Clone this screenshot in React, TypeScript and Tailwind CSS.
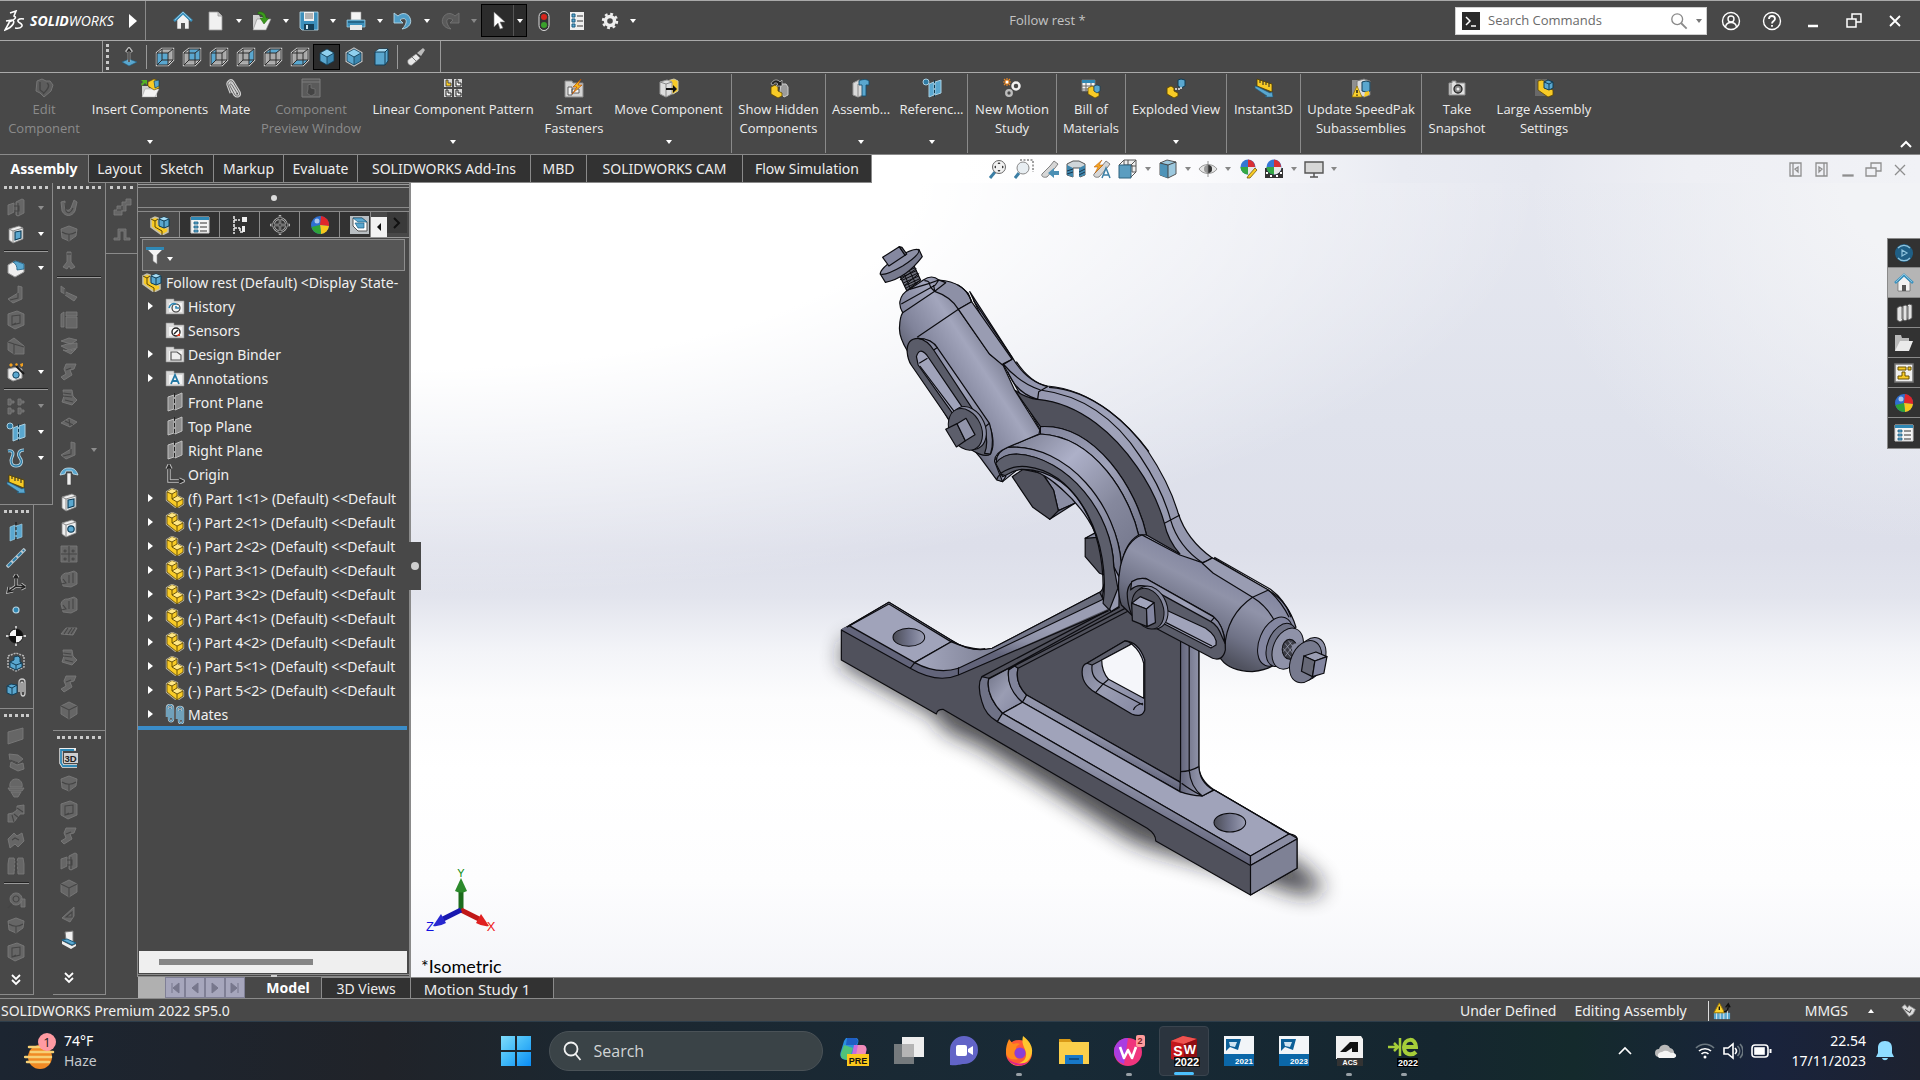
import React from "react";

type Kids = { children?: React.ReactNode };

const Svg = ({ children, size = "h-5 w-5" }: Kids & { size?: string }) => (
  <svg viewBox="0 0 20 20" className={`${size} shrink-0`} aria-hidden="true" fill="none">
    {children}
  </svg>
);

const Caret = ({ c = "#ffffff" }: { c?: string }) => (
  <svg viewBox="0 0 6 4" className="h-1 w-1.5 shrink-0" aria-hidden="true">
    <path d="M0 0h6L3 4z" fill={c} />
  </svg>
);

const B = "#5aa7cf";
const D = "#1d5d80";
const Y = "#f8cb26";

/* ---------- view cubes ---------- */
const faces: Record<string, string> = {
  front: "M2 6h11v12H2z",
  back: "M7 2h11v11H7z",
  left: "M2 6l5-4v11l-5 5z",
  right: "M13 6l5-4v11l-5 5z",
  top: "M2 6l5-4h11l-5 4z",
  bottom: "M2 18l5-5h11l-5 5z",
};
const Wire = ({ face }: { face: string }) => (
  <Svg>
    <path d="M2 6l5-4h11v11l-5 5H2z" fill="#a9a9a9" stroke="#cdcdcd" strokeWidth="2.400" />
    <path d={faces[face]} fill={B} />
    <path d="M2 6l5-4h11v11l-5 5H2zM2 6h11v12M13 6l5-4M7 2v11H18M7 13l-5 5" stroke="#2c2c2c" strokeWidth="1" />
  </Svg>
);
const Iso = ({ glow }: { glow?: boolean }) => (
  <Svg>
    {glow && <path d="M10 2l7 4v8l-7 4-7-4V6z" stroke="#c4c4c4" strokeWidth="3" />}
    <path d="M10 2l7 4-7 4-7-4z" fill="#8fd0ee" />
    <path d="M3 6l7 4v8l-7-4z" fill={B} />
    <path d="M17 6l-7 4v8l7-4z" fill="#3b87b0" />
    <path d="M10 2l7 4v8l-7 4-7-4V6zM3 6l7 4 7-4M10 10v8" stroke="#123f58" strokeWidth=".8" />
  </Svg>
);
const Dimetric = () => (
  <Svg>
    <path d="M4 5l4-3h9v12l-3 4H4z" fill={B} stroke="#123f58" />
    <path d="M4 5l4-3h9l-3 3z" fill="#a4d8ef" />
    <path d="M4 5h10v13M14 5l3-3" stroke="#123f58" />
  </Svg>
);

/* ---------- tree and feature icons ---------- */
const PartIcon = () => (
  <Svg>
    <path d="M2 4l5-3 5 2v5l6 3v5l-6 4L2 12z" fill={Y} stroke="#b9b4a0" strokeWidth="2.4" strokeLinejoin="round" />
    <path d="M2 4l5-3 5 2v5l6 3v5l-6 4L2 12z" fill={Y} stroke="#5e4700" strokeWidth=".8" />
    <path d="M2 4l5 2 5-3-5-2zM7 11l5-3 6 3-6 3z" fill="#ffe784" />
    <path d="M2 4l5 2v5l5 3v6M7 6l5-3M7 11l5-3M12 14l6-3" stroke="#5e4700" strokeWidth=".9" />
  </Svg>
);
const AsmIcon = () => (
  <Svg>
    <path d="M1 4l4-2 3 1v6l8 4 2-2v6l-6 3L1 12z" fill={Y} stroke="#c5c0aa" strokeWidth="1.6" />
    <path d="M1 4l4 2v6l7 4v4M5 6l3-2" stroke="#5e4700" />
    <path d="M9 4l5-2 5 2v7l-5 2-5-2z" fill={B} stroke="#0f3c55" />
    <path d="M9 4l5 2 5-2-5-2z" fill="#a8dcf3" />
    <path d="M9 4l5 2 5-2M14 6v7" stroke="#0f3c55" />
  </Svg>
);
const Folder = ({ children }: Kids) => (
  <Svg>
    <path d="M1 3h8v2h10v13H1z" fill="#d9d9d9" stroke="#8f8f8f" strokeWidth=".6" />
    <path d="M4 7h13v9H4z" fill="#f3f3f3" />
    {children}
  </Svg>
);
const PlaneIcon = () => (
  <Svg>
    <path d="M3 5l6-2v14l-6 2zM10 4l7-3v14l-7 3z" fill="#8d8d8d" stroke="#c0c0c0" strokeWidth="1" />
    <path d="M9.500 1v18" stroke="#222" strokeDasharray="4 2" />
  </Svg>
);
const OriginIcon = () => (
  <Svg>
    <path d="M4 3v14h14M2 5l2-4 2 4M14 15l4 2-4 2" stroke="#bdbdbd" strokeWidth="3.400" />
    <path d="M4 3v14h14M2 5l2-4 2 4M14 15l4 2-4 2" stroke="#2b2b2b" strokeWidth="1.400" />
  </Svg>
);
const Clip = () => (
  <Svg>
    <path d="M6 15l-3-8C2 4 6 1 8 4l6 10c2 4-2 5-4 3L5 8c-1-2 1-3 2-1l5 8" stroke="#d2d2d2" strokeWidth="3" />
    <path d="M6 15l-3-8C2 4 6 1 8 4l6 10c2 4-2 5-4 3L5 8c-1-2 1-3 2-1l5 8" stroke="#5d5d5d" strokeWidth=".9" />
  </Svg>
);
const MatesIcon = () => (
  <Svg>
    <path d="M2 13V4c0-4 6-4 6 0v11c0 3-4 3-4 0V5c0-1 2-1 2 0v9" stroke="#b7c4cb" strokeWidth="2.400" />
    <path d="M2 13V4c0-4 6-4 6 0v11c0 3-4 3-4 0V5c0-1 2-1 2 0v9" stroke="#2b7fab" />
    <path d="M12 15V6c0-4 6-4 6 0v11c0 3-4 3-4 0V7c0-1 2-1 2 0v9" stroke="#b7c4cb" strokeWidth="2.400" />
    <path d="M12 15V6c0-4 6-4 6 0v11c0 3-4 3-4 0V7c0-1 2-1 2 0v9" stroke="#2b7fab" />
  </Svg>
);
const RefGeo = () => (
  <Svg>
    <path d="M7 6l5-2v13l-5 2zM13 4l6-2v13l-6 2z" fill={B} stroke="#a9cfe1" />
    <path d="M12.500 2v17" stroke="#10384d" strokeDasharray="3 2" />
    <circle cx="4" cy="4" r="3" fill="#2f7ba4" stroke="#a9cfe1" />
  </Svg>
);
const Ruler = () => (
  <Svg>
    <path d="M3 1l15 5v8L3 8z" fill={Y} stroke="#4e3c00" strokeWidth=".8" />
    <path d="M6 2v3M9 3v4M12 4v3M15 5v4" stroke="#222" />
    <path d="M1 8l3 1 12 6 2-1 1 5-8 0 2-1-12-8z" fill={B} stroke={D} strokeWidth=".6" />
  </Svg>
);
const Ball = () => (
  <Svg>
    <circle cx="10" cy="10" r="9" fill="#2f6fd0" />
    <path d="M10 10L11 1a9 9 0 0 1 8 10z" fill="#e0252b" />
    <path d="M10 10l9 1a9 9 0 0 1-8 8z" fill="#f6c81c" />
    <path d="M10 10l1 9a9 9 0 0 1-9.500-7z" fill="#2fa437" />
    <circle cx="7" cy="6" r="2.500" fill="#fff" opacity=".6" />
  </Svg>
);
const ListIcon = () => (
  <Svg>
    <path d="M1 2h18v16H1z" fill="#f4f4f4" stroke="#cfcfcf" />
    <path d="M1 2h18v3H1z" fill="#2f88b5" />
    <path d="M4 7h4v2H4zM4 11h4v2H4zM4 15h4v2H4z" fill={B} stroke={D} strokeWidth=".8" />
    <path d="M10 8h7M10 12h7M10 16h7" stroke="#333" strokeWidth="1.200" />
  </Svg>
);
const HomeIcon = () => (
  <Svg>
    <path d="M4 9v9h12V9l-6-6z" fill="#f2f2f2" stroke="#555" strokeWidth=".6" />
    <path d="M8 18v-6h4v6" fill="#555" />
    <path d="M1 10l9-8 9 8" stroke="#3c94c1" strokeWidth="2.600" />
    <path d="M2 9l8-8 8 8" stroke="#bfe0f0" strokeWidth=".6" />
  </Svg>
);
const HoleCube = ({ sq }: { sq?: boolean }) => (
  <Svg>
    <path d="M3 5l10-3 4 2v11l-10 4-4-3z" fill="#efefef" stroke="#888" strokeWidth=".8" />
    <path d="M3 5l4 2 10-3M7 7v12" stroke="#888" />
    {sq ? <path d="M9 8l6-1v7l-6 2z" fill={B} stroke="#12405a" strokeWidth="1.200" /> : <circle cx="12" cy="11" r="3.200" fill={B} stroke="#12405a" strokeWidth="1.200" />}
  </Svg>
);

/* ---------- greyed command glyphs ---------- */
const dim: Record<string, [string, string]> = {
  extrude: ["M2 7l6-2v9l-6 3zM10 4l6-3 2 1v13l-6 3-2-1z", "M8 8h5v5H8M12 5v12"],
  fillet: ["M2 15L12 9V2l4 1v12l-9 4z", "M12 9v5l-8 2"],
  shell: ["M2 4l9-3 7 3v11l-9 4-7-4z", "M6 6l8-1v8l-8 2zM6 15l4-2"],
  wedge: ["M2 6l6-4 10 8v8l-10 0-6-4z", "M8 8v10M2 6l6 2 10 3"],
  pattern: ["M2 3h3v2h3v2H5v2H2zM12 3h3v2h3v2h-3v2h-3zM2 12h3v2h3v2H5v2H2zM12 12h3v2h3v2h-3v2h-3z", ""],
  flat: ["M2 6l15-4v11L2 18z", ""],
  loft: ["M3 2l9 1 5 4-5 4-8-3zM5 10l6 3 6-2 1 6-6 2-8-4z", "M4 8l8 3"],
  revolve: ["M10 1c5 0 7 5 6 8H4c-1-3 1-8 6-8zM2 10h16l-2 3H4zM5 14h10l-3 5H8z", ""],
  sweep: ["M11 2l7-1 0 9-4 0-3 4-3 4h-6v-8l5-1 4-3z", "M11 4l6 4M8 10l5 4M6 11l2 7"],
  ribbon: ["M2 9l6-6 3 3 5-3 2 8-6 6-3-3-5 4z", "M6 10l3-2 4 2"],
  zip: ["M3 2h5l1 3-1 13H2V8zM12 2h5l1 6v10h-6l-1-13z", "M9 4l2 2-2 2 2 2-2 2 2 2-2 2"],
  zoomA: ["M10 3a6 6 0 1 0 .1 0zM15 9h4v8l-4 0z", "M10 6a3 3 0 1 0 .1 0zM6 14l-4 4"],
  wrap: ["M2 4l4-1v7c1 3 4 3 6 0l3-8 3 2-2 9c-3 6-10 6-13 0z", "M6 5l1 8c2 3 5 2 7-3"],
  dome: ["M2 5l8-3 8 3-1 7-7 5-7-3z", "M3 8c4 3 10 3 14 0M10 10v7"],
  pin: ["M8 2h4v10l4 5-4 2-2-3-2 3-4-2 4-5z", "M8 4h4"],
  brk: ["M2 2l4 3v5l-4-2zM7 8l11 5-3 4-9-6z", "M6 5v6"],
  block: ["M2 4l3-2v15H2zM7 2h11v4H7zM7 7h11v11H7z", ""],
  layers: ["M2 5l8-3 8 2-6 4zM2 10l6-2 10-1 0 5-8 2zM4 14l7 1 6-2-5 5z", ""],
  curve: ["M7 2l10 0-2 5-4 1 2 5-8 5-3-3 5-3-2-5z", "M7 8l5-2"],
  bend: ["M4 2l9 0 1 6 4 4-5 5-10-3 2-6z", "M4 5l8 1M4 8l9 1M6 12l8 2"],
  sheet: ["M2 9l8-5 8 4-7 5z", "M6 7l8 4M10 5l1 7"],
  cube: ["M10 2l8 4v8l-8 5-8-5V6z", "M2 6l8 4 8-4M10 10v9"],
  grid: ["M2 2h16v16H2z", "M10 2v16M2 10h16M6 6a1 1 0 1 0 .1 0M14 6a1 1 0 1 0 .1 0M6 14a1 1 0 1 0 .1 0M14 14a1 1 0 1 0 .1 0"],
  swap: ["M2 8a6 6 0 0 1 7-5l6-2 3 2v11l-6 3-8-1z", "M10 5v8M4 9l3 4-5 1M14 3v10"],
  lines: ["M2 12l5-6 11 0-4 7z", "M5 12l4-6M9 12l4-6M12 12l4-6"],
  rib: ["M3 14L15 3v9l-4 6z", "M7 13l6-5v5z"],
  route: ["M2 17v-5h3V8h5V4h4V1h5v6h-5v6h-4v4z", "M5 12h4M10 8v4"],
  step: ["M2 14h4V5h8v9h4v2h-6V7H8v9H2z", ""],
};
const Dim = ({ n }: { n: string }) => (
  <Svg>
    <path d={dim[n][0]} fill="#666666" stroke="#797979" strokeWidth=".9" />
    {dim[n][1] && <path d={dim[n][1]} stroke="#454545" strokeWidth="1.100" />}
  </Svg>
);

/* ---------- docked toolbars ---------- */
type Tool = { l: string; i?: React.ReactNode; c?: "on" | "off"; sep?: boolean };
const d = (l: string, n: string, c?: "on" | "off"): Tool => ({ l, i: <Dim n={n} />, c });

const ThreeD = () => (
  <Svg>
    <path d="M17 1H2v14l2 3h14" stroke="#eee" strokeWidth="3.400" />
    <path d="M15 2H2v13l2 3h14" stroke="#2f88b5" strokeWidth="1.800" />
    <path d="M5 5h14v10H5z" fill="#cfcfcf" />
    <text x="5.500" y="13.500" fontSize="9.500" fill="#222" fontFamily="Liberation Sans, sans-serif" fontWeight="700">3D</text>
  </Svg>
);

const colA1: Tool[] = [
  d("Extruded Boss", "extrude", "off"),
  { l: "Extruded Cut", i: <HoleCube sq />, c: "on" },
  { l: "s1", sep: true },
  { l: "Fillet", c: "on", i: <Svg><path d="M2 7l7-4 9 3v8l-9 5-7-4z" fill="#efefef" stroke="#999" /><path d="M7 4l3-1 8 3v5l-7 1c0-4-1-6-4-8z" fill={B} stroke={D} strokeWidth=".8" /></Svg> },
  d("Rib", "fillet"),
  d("Shell", "shell"),
  d("Draft", "wedge"),
  { l: "Hole Wizard", c: "on", i: <Svg><path d="M2 7l9-2 5 2v9l-9 3-5-3z" fill="#ececec" stroke="#999" /><circle cx="10" cy="13" r="3.200" fill={B} stroke="#12405a" /><path d="M10 4l8 8" stroke="#1a1a1a" strokeWidth="2" /><path d="M3 3l2-2 2 2-2 2zM9 2l2-1 1 2-2 1zM14 2l3-1 0 3-2 1z" fill="#f4a11f" /></Svg> },
  { l: "s2", sep: true },
  d("Linear Pattern", "pattern", "off"),
  { l: "Reference Geometry", c: "on", i: <RefGeo /> },
  { l: "Curves", c: "on", i: <Svg><path d="M2 3c5-1 6 2 4 6s-1 9 4 9 7-4 4-8-1-8 4-8" stroke="#bcd7e4" strokeWidth="3" /><path d="M2 3c5-1 6 2 4 6s-1 9 4 9 7-4 4-8-1-8 4-8" stroke="#2f7fa8" strokeWidth="1.400" /></Svg> },
  { l: "Instant3D tool", i: <Ruler /> },
];
const colA2: Tool[] = [
  { l: "Plane", i: <Svg><path d="M4 5l5-2v14l-5 2zM10 4l6-2v13l-6 2z" fill={B} stroke="#9fcbe0" strokeWidth=".7" /><path d="M10 0v20" stroke="#111" strokeDasharray="3 2" /></Svg> },
  { l: "Axis", i: <Svg><path d="M1 19L19 1" stroke="#b9c8d0" strokeWidth="3.500" /><path d="M2 18L18 2" stroke="#2b7fab" strokeWidth="2" strokeDasharray="5 2" /></Svg> },
  { l: "Coordinate System", i: <Svg><path d="M10 3v9l-7 5M10 12l8 1M8 4l2-3 2 3M3 13l-1 5 5-1M15 10l4 3-4 2" stroke="#bdbdbd" strokeWidth="3.200" /><path d="M10 3v9l-7 5M10 12l8 1M8 4l2-3 2 3M3 13l-1 5 5-1M15 10l4 3-4 2" stroke="#222" strokeWidth="1.500" /></Svg> },
  { l: "Point", i: <Svg><circle cx="10" cy="10" r="3" fill="#2f88b5" stroke="#b6d4e2" strokeWidth="1.200" /></Svg> },
  { l: "Center of Mass", i: <Svg><path d="M10 0v20M0 10h20" stroke="#ccc" strokeWidth="1.800" /><circle cx="10" cy="10" r="7" fill="#f4f4f4" stroke="#111" /><path d="M10 3a7 7 0 0 1 7 7h-7zM10 17a7 7 0 0 1-7-7h7z" fill="#111" /></Svg> },
  { l: "Bounding Box", i: <Svg><path d="M2 4l8-3 8 3v11l-8 4-8-4z" stroke="#b5b5b5" strokeDasharray="2 1" strokeWidth="1.500" /><path d="M4 10l4-2V5l4-1 2 2v4l2 1v4l-6 3-6-3z" fill={B} stroke="#123f58" /><path d="M4 10l6 3 6-2M10 13v5" stroke="#123f58" /></Svg> },
  { l: "Mate Reference", i: <Svg><path d="M1 8l4-2 6 1v8l-5 2-5-2z" fill={B} stroke="#123f58" /><path d="M1 8l5 2 5-3M6 10v7" stroke="#123f58" /><path d="M13 14V4c0-4 6-4 6 0v11c0 4-4 4-4 0V5c0-1 2-1 2 0v9" stroke="#ccc" strokeWidth="1.300" /></Svg> },
];
const colA3: Tool[] = [
  d("Planar Surface", "flat"), d("Lofted Surface", "loft"), d("Revolved Surface", "revolve"), d("Swept Surface", "sweep"),
  d("Filled Surface", "ribbon"), d("Knit Surface", "zip"), { l: "s3", sep: true },
  d("Trim Surface", "zoomA"), d("Extend Surface", "dome"), d("Untrim Surface", "shell"),
];
const colB1: Tool[] = [
  d("Wrap", "wrap"), d("Dome", "dome"), d("Freeform", "pin"), { l: "s4", sep: true },
  d("Base Flange", "brk"), d("Convert", "block"), d("Lofted Bend", "layers"), d("Edge Flange", "curve"),
  d("Miter Flange", "bend"), d("Hem", "sheet"), d("Jog", "fillet", "off"),
  { l: "Forming Tool", i: <Svg><path d="M1 9c2-6 5-7 9-7s7 1 9 7l-5-1-1-3H7L6 8z" fill={B} stroke="#d7ecf5" strokeWidth=".7" /><path d="M8 7h4v12H8z" fill="#eee" stroke="#444" strokeWidth=".6" /></Svg> },
  { l: "Cut", i: <HoleCube sq /> }, { l: "Simple Hole", i: <HoleCube /> },
  d("Vent", "grid"), d("Unfold", "swap"), d("Fold", "swap"), d("Flatten", "lines"), d("No Bends", "bend"), d("Insert Bends", "curve"), d("Rip", "cube"),
];
const colB2: Tool[] = [
  { l: "3D Sketch", i: <ThreeD /> },
  d("Weldment", "dome"), d("Structural Member", "shell"), d("Trim Extend", "curve"), d("Extruded Boss 2", "extrude"), d("End Cap", "cube"), d("Gusset", "rib"),
  { l: "Weld Bead", i: <Svg><path d="M6 2l8-1v11l-7-2z" fill="#f0f0f0" stroke="#777" /><path d="M3 10l5-1 9 4-4 2z" fill={B} stroke={D} /><path d="M3 11l10 5 4-2v2l-5 3-9-5z" fill="#eee" /></Svg> },
];

const Grip = () => <div className="mx-1 mt-[3px] mb-[6px] h-[3px] shrink-0 border-t-[3px] border-dotted border-[#c9c9c9]" />;

const ToolGroup = ({ items, w, pad, name }: { items: Tool[]; w: string; pad: string; name: string }) => (
  <div role="toolbar" aria-label={name} className={`${w} ${pad} flex shrink-0 flex-col border-r border-b border-[#8a8a8a]`}>
    <Grip />
    {items.map((t) =>
      t.sep ? (
        <div key={t.l} className="mx-1 my-[3px] h-[2px] shrink-0 border-t border-b border-t-[#222] border-b-[#9a9a9a]" />
      ) : (
        <div key={t.l} className="flex h-[26px] shrink-0 items-center pl-1.5">
          <button aria-label={t.l} className="flex h-5 w-5 items-center justify-center">{t.i}</button>
          {t.c && <button aria-label={`${t.l} options`} className="ml-3 flex h-5 w-2 items-center"><Caret c={t.c === "on" ? "#fff" : "#8d8d8d"} /></button>}
        </div>
      ),
    )}
  </div>
);

const More = ({ w }: { w: string }) => (
  <div className={`${w} flex flex-1 items-center border-r border-b border-[#8a8a8a]`}>
    <button aria-label="More commands" className="ml-2 h-4 w-4">
      <svg viewBox="0 0 16 16" fill="none" stroke="#fff" strokeWidth="1.800"><path d="M4 3l4 4 4-4M4 8l4 4 4-4" /></svg>
    </button>
  </div>
);

/* ---------- title bar ---------- */
const quick: { l: string; off?: boolean; i: React.ReactNode }[] = [
  { l: "New", i: <Svg><path d="M4 1h9l4 4v14H4z" fill="#f1f1f1" stroke="#999" strokeWidth=".8" /><path d="M13 1v4h4" fill="#ccc" stroke="#999" strokeWidth=".8" /></Svg> },
  { l: "Open", i: <Svg><path d="M1 4h6l1 2h6v13H1z" fill="#cfcfcf" /><path d="M5 8h14l-5 11H1z" fill="#efefef" stroke="#888" strokeWidth=".6" /><path d="M6 1c5-1 8 2 8 6h3l-5 6-4-6h3c0-3-2-4-5-4z" fill="#3c9a1e" stroke="#1f5c0c" strokeWidth=".5" /></Svg> },
  { l: "Save", i: <Svg><path d="M1 1h18v18H3l-2-2z" fill="#3c8fbb" stroke="#bcdcea" strokeWidth=".8" /><path d="M5 1h10v9H5z" fill="#f1f1f1" /><path d="M6 3h8M6 5h8M6 7h8" stroke="#555" strokeWidth=".8" /><path d="M5 13h10v6H5z" fill="#163f56" /><path d="M7 14h2v4H7z" fill="#cfe8f4" /></Svg> },
  { l: "Print", i: <Svg><path d="M5 1h10v8H5z" fill="#f4f4f4" stroke="#999" strokeWidth=".6" /><path d="M1 9h18v7H1z" fill="#3b8fba" stroke="#a8d1e4" strokeWidth=".7" /><path d="M2 11h16" stroke="#123f58" /><path d="M4 14h12v5H4z" fill="#e9e9e9" /></Svg> },
  { l: "Undo", i: <Svg><path d="M1 2v10h9L7 9c4-3 7-1 6 3-1 3-2 4-4 6 8-1 10-7 8-11-2-5-8-6-12-2z" fill="#4f9dc7" stroke="#b5d7e7" strokeWidth=".9" /></Svg> },
  { l: "Redo", off: true, i: <Svg><path d="M19 2v10h-9l3-3c-4-3-7-1-6 3 1 3 2 4 4 6-8-1-10-7-8-11 2-5 8-6 12-2z" fill="#5a5a5a" stroke="#747474" strokeWidth=".9" /></Svg> },
];

const TitleBar = () => (
  <header className="flex h-[41px] shrink-0 items-stretch border-t border-b border-[#a9a9a9]">
    <div className="flex w-[146px] items-center border-r border-[#8a8a8a] pl-1">
      <svg viewBox="0 0 22 22" className="h-[22px] w-[22px]" fill="none" stroke="#fff" strokeWidth="1.600" aria-hidden="true">
        <path d="M6 3l6-2-2 5c3 1 1 4-5 6M2 11l6-1c4 1 1 7-7 10l5-9M20 9c-6-1-8 2-4 4s2 6-5 5" />
      </svg>
      <span className="ml-1 text-[14px] font-bold italic text-white">SOLID<span className="font-normal">WORKS</span></span>
      <button aria-label="Show menu" className="flex flex-1 justify-end pr-2">
        <svg viewBox="0 0 8 14" className="h-3.5 w-2"><path d="M0 0l8 7-8 7z" fill="#fff" /></svg>
      </button>
    </div>
    <button aria-label="Home" className="ml-5 flex w-[33px] items-center justify-center"><HomeIcon /></button>
    {quick.map((q) => (
      <div key={q.l} className="flex w-[47px] items-center">
        <button aria-label={q.l} className="flex w-8 justify-center">{q.i}</button>
        <button aria-label={`${q.l} options`} className="flex w-[15px] justify-center py-2"><Caret c={q.off ? "#888" : "#fff"} /></button>
      </div>
    ))}
    <div className="my-[3px] flex w-[46px] items-stretch border border-black bg-[#2b2b2b]">
      <button aria-label="Select" className="flex w-8 items-center justify-center border-r border-[#555]">
        <Svg><path d="M6 1v15l4-4 2 6 3-1-3-6h5z" fill="#fff" stroke="#777" strokeWidth=".6" /></Svg>
      </button>
      <button aria-label="Select options" className="flex flex-1 items-center justify-center"><Caret /></button>
    </div>
    <button aria-label="Rebuild" className="flex w-[34px] items-center justify-center">
      <Svg><rect x="5" y="0.500" width="10" height="19" rx="5" fill="#333" stroke="#ddd" /><circle cx="10" cy="6" r="3" fill="#d8261c" /><circle cx="10" cy="14" r="3" fill="#3aa12b" /></Svg>
    </button>
    <button aria-label="File Properties" className="flex w-8 items-center justify-center">
      <Svg><path d="M3 1h14v18H3z" fill="#efefef" /><path d="M5 3h3v3H5zM5 8h3v3H5zM5 13h3v3H5z" fill={B} stroke={D} /><path d="M10 5h6M10 10h6M10 15h6" stroke="#333" /></Svg>
    </button>
    <button aria-label="Options" className="flex w-[33px] items-center justify-center">
      <Svg><circle cx="10" cy="10" r="4.500" stroke="#eee" strokeWidth="3.400" /><circle cx="10" cy="10" r="7" stroke="#eee" strokeWidth="2.400" strokeDasharray="2.800 2.700" /></Svg>
    </button>
    <button aria-label="Options menu" className="flex w-3.5 items-center justify-center"><Caret /></button>
    <h1 className="flex flex-1 items-center justify-center text-[13px] text-[#c4c4c4]">Follow rest *</h1>
    <div className="flex items-center">
      <form role="search" className="flex h-7 w-[252px] items-center border border-[#cfcfcf] bg-white pl-1.5" onSubmit={(e) => e.preventDefault()}>
        <span className="flex h-[18px] w-[18px] items-center justify-center bg-[#2a2a2a]">
          <svg viewBox="0 0 14 14" className="h-3.5 w-3.5" fill="none" stroke="#fff" strokeWidth="1.500"><path d="M2 3l4 4-4 4M7 12h5" /></svg>
        </span>
        <input aria-label="Search Commands" placeholder="Search Commands" className="ml-2 min-w-0 flex-1 bg-transparent text-[13px] text-[#444] outline-none placeholder:text-[#6a6a6a]" />
        <button aria-label="Search" className="p-1"><Svg size="h-4.5 w-4.5"><circle cx="8" cy="8" r="6" stroke="#8a8a8a" strokeWidth="1.500" /><path d="M12.500 12.500l6 6" stroke="#8a8a8a" strokeWidth="2" /></Svg></button>
        <button aria-label="Search options" className="p-1"><Caret c="#777" /></button>
      </form>
      <button aria-label="Login" className="ml-[3px] flex w-[41px] justify-center"><Svg><circle cx="10" cy="10" r="8.500" stroke="#fff" strokeWidth="1.400" /><circle cx="10" cy="8" r="3" stroke="#fff" strokeWidth="1.400" /><path d="M4.500 16c1-6 10-6 11 0" stroke="#fff" strokeWidth="1.400" /></Svg></button>
      <button aria-label="Help" className="flex w-[41px] justify-center"><Svg><circle cx="10" cy="10" r="8.500" stroke="#fff" strokeWidth="1.400" /><path d="M7 8c0-4 6-4 6 0 0 2-3 2-3 4.500M10 14v1.800" stroke="#fff" strokeWidth="1.800" /></Svg></button>
      <button aria-label="Minimize" className="flex w-[41px] justify-center"><Svg><path d="M5 15h10" stroke="#fff" strokeWidth="2.500" /></Svg></button>
      <button aria-label="Restore" className="flex w-[41px] justify-center"><Svg><path d="M3 8h9v8H3zM8 8V3h9v8h-5" stroke="#fff" strokeWidth="1.500" /></Svg></button>
      <button aria-label="Close" className="mr-[5px] flex w-[41px] justify-center"><Svg><path d="M5 5l10 10M15 5L5 15" stroke="#fff" strokeWidth="1.800" /></Svg></button>
    </div>
  </header>
);

const ViewBar = () => (
  <div className="flex h-8 shrink-0 items-stretch border-b border-[#a9a9a9]">
    <div className="ml-[102px] flex items-center border-l border-r border-[#9a9a9a] pr-1.5 pl-[3px]" role="toolbar" aria-label="Standard Views">
      <div className="h-[26px] border-l-[3px] border-dotted border-[#c9c9c9]" />
      <button aria-label="Normal To" className="mr-[7px] ml-2.5"><Svg><path d="M3 15l7-3 8 3-8 4z" fill={B} stroke={D} strokeWidth=".6" /><path d="M10 15V2M7 5l3-4 3 4" stroke="#bbb" strokeWidth="2.600" /><path d="M10 15V3M8 5l2-3 2 3" stroke="#222" strokeWidth="1.200" /></Svg></button>
      <div className="mr-1 h-6 border-l border-[#9a9a9a]" />
      {["front", "back", "left", "right", "top", "bottom"].map((f) => (
        <button key={f} aria-label={`${f} view`} className="flex w-[27px] justify-center"><Wire face={f} /></button>
      ))}
      <button aria-label="Isometric view" className="flex h-[26px] w-[27px] items-center justify-center border border-black bg-[#2b2b2b]"><Iso /></button>
      <button aria-label="Trimetric view" className="flex w-[27px] justify-center"><Iso glow /></button>
      <button aria-label="Dimetric view" className="flex w-[27px] justify-center"><Dimetric /></button>
      <div className="ml-[3px] h-6 border-l border-[#9a9a9a]" />
      <button aria-label="View Selector" className="px-2"><Svg><path d="M2 13l8-6 4 4-8 7c-3 1-5-2-4-5z" fill="#e8e8e8" stroke="#888" strokeWidth=".6" /><path d="M11 6l6-5 2 2-4 6z" fill="#bbb" /><path d="M6 10l4 4" stroke="#777" /></Svg></button>
    </div>
  </div>
);

/* ---------- ribbon ---------- */
type Cmd = { a: string; b?: string; w: string; i: React.ReactNode; off?: boolean; menu?: boolean; end?: boolean };
const commands: Cmd[] = [
  { a: "Edit", b: "Component", w: "w-[88px]", off: true, i: <Svg><path d="M3 3l5-2 4 2 4 0 3 4-2 6-7 6-4-4-4-2z" fill="#5d5d5d" stroke="#757575" /><path d="M6 4v8l4 3M13 5c3 2 2 5-4 11" stroke="#444" strokeWidth="1.400" /></Svg> },
  { a: "Insert Components", w: "w-[124px]", menu: true, i: <Svg><path d="M2 8h6l1 2h8v9H2z" fill="#cfcfcf" /><path d="M5 11h14l-4 8H2z" fill="#f3f3f3" stroke="#999" strokeWidth=".5" /><path d="M1 2l6 0v5l-2-2-3 3-1-2 2-2z" fill="#52b025" /><path d="M8 4l6-3 5 2v7l-5 2-6-4z" fill={Y} stroke="#5e4700" strokeWidth=".6" /><path d="M14 3l5-1v6l-4 2z" fill={B} stroke="#123f58" strokeWidth=".7" /></Svg> },
  { a: "Mate", w: "w-[46px]", i: <Clip /> },
  { a: "Component", b: "Preview Window", w: "w-[106px]", off: true, i: <Svg><path d="M1 1h18v18H1z" fill="#5a5a5a" stroke="#7d7d7d" /><path d="M1 4h18" stroke="#7d7d7d" /><path d="M7 7l3-1v4l4 1v5l-4 2-4-3 1-4z" fill="#444" stroke="#777" strokeWidth=".7" /></Svg> },
  { a: "Linear Component Pattern", w: "w-[178px]", menu: true, i: <Svg><path d="M1 1h8v8H1zM11 1h8v8h-8zM1 11h8v8H1zM11 11h8v8h-8z" fill="#d6d6d6" /><path d="M3 2h2v3h3v3H3z" fill={Y} stroke="#333" strokeWidth=".8" /><path d="M13 2h2v3h3v3h-5zM3 12h2v3h3v3H3zM13 12h2v3h3v3h-5z" fill="#f7f7f7" stroke="#222" strokeWidth="1" /></Svg> },
  { a: "Smart", b: "Fasteners", w: "w-[64px]", i: <Svg><path d="M1 3h7l1 2h10v14H1z" fill="#d4d4d4" stroke="#8b8b8b" /><path d="M4 9h4v8H4zM8 11h7v4H8z" fill="#f5f5f5" stroke="#444" strokeWidth=".8" /><path d="M17 1l-8 8h4l-5 7 10-9h-4z" fill="#f7b81b" stroke="#b54900" strokeWidth=".7" /></Svg> },
  { a: "Move Component", w: "w-[126px]", menu: true, end: true, i: <Svg><path d="M8 3l7-2 4 2v10l-5 3-6-2z" fill={Y} stroke="#cfc9a8" /><path d="M1 4l7-2 5 2v12l-6 3-6-3z" fill="#dedede" stroke="#999" /><path d="M1 4l6 2 6-2M7 6v13" stroke="#888" /><path d="M7 10h7V7l4 4-4 4v-3H7z" fill="#111" /></Svg> },
  { a: "Show Hidden", b: "Components", w: "w-[94px]", end: true, i: <Svg><path d="M12 6l5 0 2 3v8l-4 2-4-5z" fill="#9b9b9b" stroke="#ccc" /><path d="M2 9l4-2 3 2v4l4 2v3l-4 2-7-4z" fill={Y} stroke="#5e4700" strokeWidth=".8" /><path d="M2 6c2-5 7-5 9-2l2-2v6H7l2-2c-2-2-4-1-5 1z" fill="#222" stroke="#ccc" strokeWidth=".7" /></Svg> },
  { a: "Assemb...", w: "w-[70px]", menu: true, i: <Svg><path d="M2 5l6-3 4 2v13l-5 2-5-2z" fill="#dadada" stroke="#999" /><path d="M7 6v12" stroke="#888" /><path d="M8 3c3-2 8-2 10 0v4h-3v11h-4V7H8z" fill={B} stroke="#174f6d" strokeWidth=".9" /></Svg> },
  { a: "Referenc...", w: "w-[72px]", menu: true, end: true, i: <RefGeo /> },
  { a: "New Motion", b: "Study", w: "w-[89px]", end: true, i: <Svg><circle cx="14" cy="8" r="3.500" stroke="#f1f1f1" strokeWidth="2.500" /><circle cx="7" cy="15" r="2.800" stroke="#bdbdbd" strokeWidth="2.300" /><path d="M5 0v8M1 4h8M2 1l6 6M8 1L2 7" stroke="#f08a24" strokeWidth="1.100" /><circle cx="5" cy="4" r="1.500" fill="#fff" /></Svg> },
  { a: "Bill of", b: "Materials", w: "w-[69px]", end: true, i: <Svg><path d="M1 2h13v11H1z" fill="#f4f4f4" stroke="#777" /><path d="M1 2h13v3H1z" fill="#2f88b5" /><path d="M1 8h13M1 11h13M5 5v8M10 5v8" stroke="#666" /><path d="M7 10l4-2 2 1v4l5 2v3l-4 2-7-4z" fill={Y} stroke="#5e4700" strokeWidth=".7" /><path d="M13 8l3-1 3 1v5l-3 2-3-2z" fill={B} stroke="#123f58" strokeWidth=".7" /></Svg> },
  { a: "Exploded View", w: "w-[101px]", menu: true, end: true, i: <Svg><path d="M1 10l4-2 3 2v3l4 2v3l-4 2-7-4z" fill={Y} stroke="#5e4700" strokeWidth=".9" /><path d="M12 2l3-1 4 1v6l-4 2-3-2z" fill={B} stroke="#0f3c55" /><path d="M9 11h6v-2" stroke="#eee" strokeDasharray="2 1" strokeWidth="1.500" /></Svg> },
  { a: "Instant3D", w: "w-[74px]", end: true, i: <Ruler /> },
  { a: "Update SpeedPak", b: "Subassemblies", w: "w-[121px]", end: true, i: <Svg><path d="M1 2h10v16H1z" fill="#8f8f8f" /><path d="M6 3l7-2 6 2v14l-6 2-7-3z" fill="#dcdcdc" stroke="#777" /><path d="M11 4l4-1 4 1v9l-4 1-4-1z" fill={B} stroke="#123f58" /><path d="M14 14l4-1v4l-5 2z" fill={Y} /><path d="M6 8l5 11H1z" fill="#fcd22e" stroke="#8a6a00" strokeWidth=".7" /><path d="M6 12v3M6 16.500v1.200" stroke="#111" strokeWidth="1.400" /></Svg> },
  { a: "Take", b: "Snapshot", w: "w-[70px]", i: <Svg><path d="M2 5h3V3h4v2h9v12H2z" fill="#e0e0e0" stroke="#8b8b8b" /><circle cx="11" cy="11" r="4" fill="#888" stroke="#222" strokeWidth="1.300" /><circle cx="11" cy="11" r="1.500" fill="#eee" /><path d="M4 6v10" stroke="#777" /></Svg> },
  { a: "Large Assembly", b: "Settings", w: "w-[104px]", i: <Svg><path d="M1 1h12v17H1z" fill="#777" opacity=".7" /><path d="M4 3l4-1 3 2v5l8 3v5l-5 2L4 12z" fill={Y} stroke="#5e4700" strokeWidth=".8" /><path d="M10 4l4-2 5 2v6l-4 2-5-2z" fill={B} stroke="#0f3c55" /><path d="M10 4l5 2 4-2M15 6v6" stroke="#0f3c55" /></Svg> },
];

const Ribbon = () => (
  <div className="flex h-[81px] shrink-0 items-stretch" role="toolbar" aria-label="Assembly commands">
    {commands.map((c) => (
      <button key={c.a} className={`${c.w} ${c.end ? "border-r border-[#8a8a8a]" : ""} ${c.off ? "text-[#8b8b8b]" : "text-[#ededed]"} my-px flex shrink-0 flex-col items-center pt-1 text-[13px] leading-[19px] whitespace-nowrap`}>
        {c.i}
        <span className="mt-0.5">{c.a}</span>
        <span className="h-[19px]">{c.b}</span>
        {c.menu && <span className="mt-[2px]"><Caret /></span>}
      </button>
    ))}
    <button aria-label="Collapse ribbon" className="mr-2 mb-1 ml-auto self-end">
      <svg viewBox="0 0 12 12" className="h-3 w-3" fill="none" stroke="#fff" strokeWidth="2"><path d="M1 9l5-5 5 5" /></svg>
    </button>
  </div>
);

const tabs: [string, string][] = [
  ["Assembly", "w-[89px]"], ["Layout", "w-[62px]"], ["Sketch", "w-[63px]"], ["Markup", "w-[70px]"], ["Evaluate", "w-[74px]"],
  ["SOLIDWORKS Add-Ins", "w-[173px]"], ["MBD", "w-[56px]"], ["SOLIDWORKS CAM", "w-[156px]"], ["Flow Simulation", "w-[129px]"],
];

const SceneBall = ({ film }: { film?: boolean }) => (
  <Svg>
    {film && <path d="M1 9h18v10H1z" fill="#333" />}
    {film && <path d="M2 13h2v2H2zM6 16h2v2H6zM12 16h2v2h-2zM16 13h2v2h-2z" fill="#fff" />}
    <circle cx="10" cy="8" r="7.500" fill="#3577d4" />
    <path d="M10 8V.500A7.500 7.500 0 0 1 17 8z" fill="#d93035" />
    <path d="M10 8H2.500A7.500 7.500 0 0 0 10 15.500z" fill="#34a845" />
    <path d="M10 8h7.500a7.500 7.500 0 0 1-7.500 7.500z" fill="#e7e7e7" />
    {!film && <path d="M10 17l7-8 2 2-7 8-3 0z" fill={Y} stroke="#5e4700" strokeWidth=".7" />}
  </Svg>
);
const hud: { l: string; c?: boolean; i: React.ReactNode }[] = [
  { l: "Zoom to Fit", i: <Svg><path d="M2 19l5-6" stroke="#3c7fa5" strokeWidth="3" /><circle cx="11" cy="8" r="6.500" fill="#f1f1f1" stroke="#666" /><path d="M11 3l1.500 2h-3zM11 13l1.500-2h-3zM6 8l2-1.500v3zM16 8l-2-1.500v3z" fill="#333" /></Svg> },
  { l: "Zoom to Area", i: <Svg><path d="M6 1h13v12" stroke="#444" strokeDasharray="2 1.500" /><path d="M1 19l4-5" stroke="#3c7fa5" strokeWidth="3" /><circle cx="9" cy="9" r="6" fill="#e8eef2" stroke="#888" /></Svg> },
  { l: "Previous View", i: <Svg><path d="M2 15l8-8 4-5 4 3-3 4-8 9c-4 1-6-1-5-3z" fill="#d6d6d6" stroke="#666" strokeWidth=".8" /><path d="M19 12h-5V9l-6 5 6 5v-3h5z" fill="#4c90b5" /></Svg> },
  { l: "Section View", i: <Svg><path d="M1 5l6-3h6l6 3v11l-5 2V9H7v9l-6-2z" fill="#cfd6da" stroke="#555" /><path d="M1 6l6 3v9l-6-2zM13 9l6-3v10l-6 2z" fill="#3f86ad" /><path d="M1 12l6-2M1 15l6-2M13 13l6-3M13 16l6-3" stroke="#123" strokeWidth=".8" /></Svg> },
  { l: "Dynamic Annotation Views", i: <Svg><path d="M2 15l8-8 4-5 4 3-3 4-8 9c-4 1-6-1-5-3z" fill="#d6d6d6" stroke="#666" strokeWidth=".8" /><path d="M10 1L2 8h4l-3 6 8-8H7z" fill="#f5a623" stroke="#b55300" strokeWidth=".5" /><path d="M10 19l4-10 4 10M11.500 16h5" stroke="#3c7fa5" strokeWidth="1.500" /></Svg> },
  { l: "View Orientation", c: true, i: <Svg><path d="M6 1h12v12l-4 0V6H6z" fill="#eee" stroke="#555" /><path d="M1 6h12v13H1z" fill="#5b9dc0" stroke="#2e627f" /><path d="M1 6l5-5M13 6l5-5M13 18l5-5M10 1v5M18 7h-5" stroke="#555" /></Svg> },
  { l: "Display Style", c: true, i: <Svg><path d="M2 4l7-3 9 2v12l-8 4-8-3z" fill="#9cc8de" stroke="#555" /><path d="M2 4l8 2v13l-8-3z" fill="#4e93b8" /><path d="M2 4l8 2 8-3M10 6v13" stroke="#444" /></Svg> },
  { l: "Hide/Show Items", c: true, i: <Svg><path d="M1 10c4-6 14-6 18 0-4 6-14 6-18 0z" fill="#e5e5e5" stroke="#999" /><circle cx="10" cy="10" r="4" fill="#999" /><path d="M10 6a4 4 0 0 1 0 8z" fill="#333" /><path d="M10 2v16" stroke="#777" strokeWidth=".8" /></Svg> },
  { l: "Edit Appearance", i: <SceneBall /> },
  { l: "Apply Scene", c: true, i: <SceneBall film /> },
  { l: "View Settings", c: true, i: <Svg><path d="M1 3h18v11H1z" fill="#d7d7d7" stroke="#555" strokeWidth="1.400" /><path d="M10 14v4M6 18h8" stroke="#555" strokeWidth="1.500" /></Svg> },
];
const docCtl: [string, string][] = [
  ["Dock left", "M4 4h11v13H4zM7 4v13M12 8l-3 2 3 3z"],
  ["Dock right", "M4 4h11v13H4zM12 4v13M7 8l3 2-3 3z"],
  ["Minimize document", "M5 16h10v1H5z"],
  ["Restore document", "M2 9h10v8H2zM7 9V4h10v8h-5"],
  ["Close document", "M5 6l10 10M15 6L5 16"],
];

const TabRow = () => (
  <div className="flex h-[29px] shrink-0 items-stretch border-t border-[#8a8a8a] bg-[linear-gradient(90deg,#ffffff_50%,#fbfbfd_62%,#e9ebf2_73%,#e6e8f0_80%,#eeeff4_88%,#f1f2f6_100%)]">
    <div role="tablist" aria-label="CommandManager" className="flex font-['Noto_Sans',sans-serif] text-[14px] text-[#ededed]">
      {tabs.map(([t, w], i) => (
        <button key={t} role="tab" aria-selected={i === 0} className={`${w} shrink-0 whitespace-nowrap border-r border-b border-[#8a8a8a] ${i === 0 ? "border-b-[#484848] bg-[#484848] font-bold text-white" : "bg-[#323232]"}`}>
          {t}
        </button>
      ))}
    </div>
    <div role="toolbar" aria-label="Heads-up view" className="ml-[113px] flex items-center">
      {hud.map((h) => (
        <div key={h.l} className="flex items-center">
          <button aria-label={h.l} className="flex w-[26px] justify-center">{h.i}</button>
          {h.c && <button aria-label={`${h.l} options`} className="flex w-3.5 justify-center py-2"><Caret c="#888" /></button>}
        </div>
      ))}
    </div>
    <div className="mr-[7px] ml-auto flex items-center">
      {docCtl.map(([l, p]) => (
        <button key={l} aria-label={l} className="flex w-[26px] justify-center"><Svg><path d={p} stroke="#8e8e8e" strokeWidth="1.300" /></Svg></button>
      ))}
    </div>
  </div>
);

/* ---------- feature tree ---------- */
const tree: { t: string; a?: boolean; i: React.ReactNode }[] = [
  { t: "History", a: true, i: <Folder><circle cx="11" cy="12" r="4" stroke="#333" strokeWidth="1.100" /><path d="M11 10v2h3M4 12c1-4 4-5 7-4" stroke="#2f88b5" strokeWidth="1.600" /></Folder> },
  { t: "Sensors", i: <Folder><circle cx="11" cy="12" r="4" fill="#fff" stroke="#222" strokeWidth="1.400" /><path d="M9 14l4-4" stroke="#222" strokeWidth="1.400" /><path d="M11 16l4-3 0 3z" fill="#e03a1e" /></Folder> },
  { t: "Design Binder", a: true, i: <Folder><path d="M6 8h6l4 3v5H6z" fill="#eee" stroke="#555" strokeWidth="1.200" /></Folder> },
  { t: "Annotations", a: true, i: <Folder><path d="M6 16l4-9 4 9M7.500 13h5.500" stroke="#2378a4" strokeWidth="1.800" /></Folder> },
  { t: "Front Plane", i: <PlaneIcon /> },
  { t: "Top Plane", i: <PlaneIcon /> },
  { t: "Right Plane", i: <PlaneIcon /> },
  { t: "Origin", i: <OriginIcon /> },
  ...["(f) Part 1<1>", "(-) Part 2<1>", "(-) Part 2<2>", "(-) Part 3<1>", "(-) Part 3<2>", "(-) Part 4<1>", "(-) Part 4<2>", "(-) Part 5<1>", "(-) Part 5<2>"].map((p) => ({
    t: `${p} (Default) <<Default`, a: true, i: <PartIcon />,
  })),
  { t: "Mates", a: true, i: <MatesIcon /> },
];
const fmTabs: [string, string, React.ReactNode][] = [
  ["FeatureManager", "w-10 bg-[#484848]", <AsmIcon />],
  ["PropertyManager", "w-10 bg-[#323232]", <ListIcon />],
  ["ConfigurationManager", "w-10 bg-[#323232]", <Svg><path d="M4 1v18M4 5h6M4 13h6M10 13v4h4" stroke="#eee" strokeWidth="1.500" strokeDasharray="3 1" /><path d="M12 2h5v5h-5zM12 11h3v6h-3z" fill="#eee" /></Svg>],
  ["DimXpertManager", "w-10 bg-[#323232]", <Svg><circle cx="10" cy="10" r="6.500" stroke="#b5b5b5" strokeWidth="2.400" /><path d="M10 0v20M0 10h20" stroke="#b5b5b5" strokeWidth="2.400" /><circle cx="10" cy="10" r="6.500" stroke="#222" strokeWidth=".9" /><path d="M10 1v18M1 10h18" stroke="#222" strokeWidth=".9" /></Svg>],
  ["DisplayManager", "w-10 bg-[#323232]", <Ball />],
  ["CAM Feature Tree", "w-[31px] justify-end bg-[#323232]", <Svg><path d="M0 1h19v18H0z" fill="#b8bec2" /><path d="M3 3h9l5 4v9h-9l-5-5z" fill="#fff" stroke="#555" /><path d="M3 3h9l5 4H8zM5 8h9v5H8z" fill={B} stroke={D} strokeWidth=".7" /></Svg>],
];

const Panel = () => (
  <section aria-label="Feature tree" className="relative flex w-[273px] shrink-0 flex-col border-r-2 border-[#8a8a8a] font-['Noto_Sans',sans-serif] text-[14px] text-[#f0f0f0]">
    <div className="mt-px h-[4px] border-t border-b border-[#9a9a9a]" />
    <div className="flex h-[19px] items-center justify-center"><span className="h-1.5 w-1.5 rounded-full bg-[#dcdcdc]" /></div>
    <div className="h-[5px] border-t border-b border-[#8a8a8a]" />
    <div role="tablist" aria-label="Managers" className="ml-0.5 flex h-[26px] border-b border-[#9a9a9a]">
      {fmTabs.map(([l, c, ic], i) => (
        <button key={l} role="tab" aria-selected={i === 0} aria-label={l} className={`${c} flex shrink-0 items-center justify-center border-r border-[#8a8a8a]`}>{ic}</button>
      ))}
      <button aria-label="Scroll tabs left" className="mt-[5px] flex w-4 items-center justify-center bg-[#f3f3f3]"><svg viewBox="0 0 4 8" className="h-2 w-1"><path d="M4 0v8L0 4z" fill="#111" /></svg></button>
      <button aria-label="Scroll tabs right" className="mr-0.5 mb-1 flex flex-1 items-center justify-center bg-[#3a3a3a]"><svg viewBox="0 0 8 12" className="h-3 w-2" fill="none" stroke="#111" strokeWidth="2"><path d="M1 1l5 5-5 5" /></svg></button>
    </div>
    <label className="mx-1 mt-px flex h-8 shrink-0 items-center border border-[#8d8d8d] bg-[#565656] pl-0.5">
      <Svg><path d="M1 3h18l-7 7v9l-4-3v-6z" fill="#f2f2f2" stroke="#888" strokeWidth=".6" /><path d="M1 2h18v3H1z" fill="#2f88b5" /></Svg>
      <span className="mt-2 ml-0.5"><Caret /></span>
      <input aria-label="Filter" className="min-w-0 flex-1 bg-transparent outline-none" />
    </label>
    <div className="-mt-px flex h-6 items-center gap-1 overflow-hidden pl-1 whitespace-nowrap"><AsmIcon /><span>Follow rest (Default) &lt;Display State-</span></div>
    <ul className="mr-0.5 border-b-4 border-[#3a8cc8]">
      {tree.map((n) => (
        <li key={n.t} className="flex h-6 items-center overflow-hidden whitespace-nowrap">
          <button aria-label={`Expand ${n.t}`} className="flex w-[27px] shrink-0 justify-start pl-2.5" disabled={!n.a}>
            {n.a && <svg viewBox="0 0 5 8" className="h-2 w-[5px]"><path d="M0 0l5 4-5 4z" fill="#fff" /></svg>}
          </button>
          {n.i}
          <span className="ml-[3px]">{n.t}</span>
        </li>
      ))}
    </ul>
    <div className="flex-1" />
    <div className="mr-0.5 ml-px flex h-[22px] items-center bg-[#efefef]"><div className="ml-5 h-1.5 w-[154px] bg-[#858585]" /></div>
    <div className="mt-px flex h-[3px] justify-center border-t border-b border-[#8a8a8a]"><span className="h-[2px] w-1.5 bg-[#cfcfcf]" /></div>
    <div className="absolute top-[359px] -right-3 z-10 flex h-12 w-3 items-center justify-center bg-[#484848]"><span className="h-2 w-2 rounded-full bg-[#cfcfcf]" /></div>
  </section>
);

/* ---------- model ---------- */
const Edge = ({ p, w = 1.2 }: { p: string; w?: number }) => (
  <path d={p} fill="none" stroke="#0c0c10" strokeWidth={w} vectorEffect="non-scaling-stroke" strokeLinejoin="round" />
);
const F = ({ p, f, e = true }: { p: string; f: string; e?: boolean }) => (
  <path d={p} fill={f} stroke={e ? "#0c0c10" : "none"} strokeWidth="1.2" vectorEffect="non-scaling-stroke" strokeLinejoin="round" />
);

const Model = () => (
  <g transform="translate(820 230) scale(.3444 .3333)">
    <g transform="translate(0 990)">
      <path d="M80 230L330 380 600 500 1050 800 1380 900 1460 975 1440 1005 1380 1000 1250 950 960 865 900 840 640 670 460 555 360 510 340 470 60 310z" fill="#1c1c20" opacity=".8" filter="url(#soft)" />
      <F f="#50515c" p="M62 210V300L338 462Q340 448 357 448L950 805Q975 822 975 843L1250 1005 1385 925V835L1145 690Q1100 660 1100 615V250L900 100 870 20 825 0V70Q822 90 812 97L500 265Q440 280 385 243L200 127z" />
      <F f="url(#strip)" p="M62 210Q66 200 85 200L275 308Q340 345 400 325L815 118 840 100 850 140 402 345Q340 372 262 325z" e={false} />
      <F f="#a0a3ba" p="M200 127L385 243 275 308 85 197z" />
      <F f="url(#bend)" p="M385 243Q440 280 500 265L812 97 822 118 402 325Q340 345 275 308z" />
      <Edge p="M62 210L262 325Q340 372 402 345L838 152M262 325L275 308M402 345L402 322M78 202L200 132 380 245Q440 272 480 266" />
      <ellipse cx="258" cy="232" rx="46" ry="27" fill="url(#hole)" stroke="#0c0c10" strokeWidth="3" />

      <F f="#6f7286" p="M470 350Q455 375 470 425 480 465 515 485L530 460Q480 405 490 355z" />
      <F f="url(#pocket)" p="M490 355L548 325Q540 380 588 427L530 460Q480 405 490 355z" />
      <F f="#80839a" p="M548 330Q540 385 588 427L600 405Q565 370 575 325L565 318z" />
      <F f="#50515c" p="M575 325L905 148 1048 240V668L600 405Q565 370 575 325z" />
      <F f="url(#strip)" p="M588 427L600 405 1048 668 1045 695z" />
      <Edge p="M470 350L835 152M490 357L870 142M548 327L890 143" />
      <F f="#a0a3ba" p="M530 460L588 427 1045 695 1110 708 1145 690 1362 822 1250 888z" />
      <F f="url(#strip)" p="M515 485L530 460 1250 888V917z" />
      <F f="#8a8da3" p="M1250 888L1362 822Q1385 825 1385 837L1250 917z" />
      <F f="#7e8195" p="M1250 917L1385 837V925L1250 1005z" />
      <Edge p="M1145 690L1385 835" />
      <ellipse cx="1190" cy="788" rx="46" ry="28" fill="url(#hole)" stroke="#0c0c10" strokeWidth="3" />
      <F f="url(#col)" p="M1047 240V635L1045 695Q1075 707 1110 708L1142 690Q1100 665 1100 615V250z" />
      <Edge p="M1072 255V630Q1075 680 1110 708M1047 635Q1075 635 1100 620M1050 670Q1075 690 1110 708" />
      <F f="url(#pocket)" p="M775 310L885 243Q925 245 943 300V450Q935 475 905 462L800 398Q755 370 762 325 765 312 775 310z" />
      <F f="#5e606d" p="M775 310L885 243Q895 243 905 252L818 300 790 315z" />
      <F f="#f5f6fa" p="M818 300L905 252Q932 275 940 310V415L838 358Q818 335 818 300z" />
      <Edge p="M790 315Q785 355 822 372L938 435M822 372L838 358M800 398L822 372M910 450Q915 435 938 430" />
    </g>

    <F f="#50515c" p="M770 925L800 912 822 960 825 1035 812 1030 770 980z" />
    <F f="#8a8da3" p="M770 925L800 908 804 922z" />
    <F f="#8a8da3" p="M645 728L742 812 740 820 692 842 678 780z" />
    <F f="#6d7083" p="M692 842L740 820 667 868z" />
    <F f="#50515c" p="M558 740L590 718 645 730 678 780 692 842 667 868 618 832z" />

    <F f="url(#arch)" p="M435 185L560 385Q600 455 660 468C800 480 900 590 950 660Q1015 760 1040 850 1065 930 1140 985L1100 1010 935 915 870 1010 868 1130 845 1145 820 1100C840 1000 820 950 800 910 760 820 650 705 575 718L530 755Q510 750 505 690L640 600 530 400z" />
    <F f="#50515c" p="M565 480Q600 505 632 508C760 520 860 620 920 710Q975 790 1000 880 1010 930 1045 972L948 915C920 780 800 580 640 590z" />
    <F f="url(#rim)" p="M640 590C800 580 920 780 948 915L925 915C900 800 800 620 640 612z" />
    <F f="url(#band)" p="M640 612C800 620 900 800 925 915Q885 940 875 1005C870 850 720 640 545 652L600 628z" />
    <F f="url(#rim)" p="M545 652C720 640 865 830 875 1005L868 1040 853 1010C850 860 720 680 570 672Q535 672 512 698 510 665 545 652z" />
    <F f="#5c5e6b" p="M510 700Q530 672 570 672C720 680 850 850 853 1010L865 1075 840 1140 822 1120C845 950 760 715 585 718 555 722 545 735 530 740z" />
    <Edge p="M525 730Q560 705 600 710C730 725 825 880 822 1085M532 402Q580 460 640 480C790 500 880 600 930 680Q995 780 1018 870 1040 950 1112 1000M545 425Q570 490 632 508L635 485 660 470M1000 880L1018 870 1045 855M1112 1000L1138 983M570 395Q610 458 662 470M665 472C800 480 905 595 955 665 1020 765 1045 850M1045 850Q1065 925 1145 985M855 1010Q865 1015 875 1005M840 1145L862 1075" />

    <F f="url(#armA)" p="M232 215Q236 190 260 178L300 150Q325 132 345 150L400 165 430 190 440 215 402 238 492 372 530 402 565 480 638 600 636 612 545 652Q505 670 507 695L530 755 513 750 465 682 375 572 255 365Q228 320 231 290 232 262 240 248 230 230 232 215z" />
    <F f="#8d90a6" p="M345 150Q420 155 440 215L402 238Q380 200 333 184 350 170 365 158z" />
    <F f="#999cb2" p="M440 215L558 388 530 405 492 372 402 238z" />
    <Edge p="M440 215Q430 180 400 165M446 212L560 386M530 402L558 388M402 238L282 322M236 222L335 165 345 150M240 248L333 184Q318 172 318 160L345 150M260 178L318 160M330 165L333 184M303 152Q315 152 318 160M513 750Q520 725 540 738L530 755" />
    <F f="#5a5c69" p="M253 365Q252 325 285 325 320 325 342 358L490 580Q512 640 495 672 480 685 440 660L375 570 265 405Q255 390 253 365z" />
    <F f="url(#rim)" p="M285 325Q325 325 342 355L492 580Q508 635 495 672L478 670Q490 640 478 592L330 360Q312 330 285 325z" />
    <F f="#a0a3ba" p="M280 380Q288 350 310 375L412 530 385 550 285 405z" />
    <Edge p="M288 400L312 385M290 408L390 545M330 360L342 352M478 592L492 580" />
    <g transform="rotate(-24 425 597)">
      <ellipse cx="432" cy="597" rx="48" ry="67" fill="#888ba0" stroke="#0c0c10" strokeWidth="3" />
      <ellipse cx="422" cy="597" rx="46" ry="65" fill="#5a5c69" stroke="#0c0c10" strokeWidth="3" />
    </g>
    <F f="#5c5e6b" p="M365 598L398 581 422 632 396 651z" />
    <F f="#9194aa" p="M398 581L424 565 450 614 422 632z" />

    <F f="#6a6c78" p="M226 125L272 105 292 150 252 182z" />
    <Edge p="M230 135L276 113M234 143L280 122M238 151L283 130M242 159L287 138M246 167L290 146M250 174L291 152M240 120L262 175M255 112L280 165M232 150L280 116M244 168L288 130" w={1} />
    <F f="#777a8e" p="M175 132Q235 120 287 58L297 80Q250 145 190 157z" />
    <F f="#8d90a6" p="M175 132Q175 115 225 82 275 52 287 60 290 75 240 108 190 138 175 132z" />
    <F f="#8588a0" p="M182 82L230 50 248 75 200 108z" />
    <F f="#5f616e" p="M230 50L238 52 252 72 247 76z" />

    <g transform="translate(0 990)">
      <F f="url(#armB)" p="M935 -75Q890 -60 872 20 860 90 875 135L905 165 1165 298Q1190 333 1255 335 1300 330 1318 315L1382 202Q1360 125 1300 90L1145 -5 1110 8 1045 -15z" />
      <F f="#999cb2" p="M1110 10L1140 -6 1302 90 1256 112 1142 40z" />
      <Edge p="M1145 -8L1308 88Q1350 120 1368 172M1256 112Q1180 165 1175 265M1256 112Q1300 140 1322 188M1302 90Q1340 125 1362 172" />
      <ellipse cx="1322" cy="245" rx="46" ry="77" transform="rotate(22 1322 245)" fill="#8386a0" stroke="#0c0c10" strokeWidth="3" />
      <ellipse cx="1340" cy="255" rx="40" ry="68" transform="rotate(22 1340 255)" fill="#6f7286" stroke="#0c0c10" strokeWidth="3" />
      <ellipse cx="1358" cy="266" rx="42" ry="64" transform="rotate(22 1358 266)" fill="#8f92a8" stroke="#0c0c10" strokeWidth="3" />
      <ellipse cx="1364" cy="268" rx="22" ry="30" fill="#3c3d46" stroke="#0c0c10" strokeWidth="3" />
      <path d="M1350 250l30 40M1345 265l25 30M1360 242l25 35M1350 290l30-40M1345 275l25-30" stroke="#a5a8bd" strokeWidth="2" />
      <F f="#85889d" p="M1370 255L1395 245V290L1372 290z" e={false} />
      <ellipse cx="1422" cy="298" rx="43" ry="68" transform="rotate(22 1422 298)" fill="#8d90a6" stroke="#0c0c10" strokeWidth="3" />
      <ellipse cx="1410" cy="305" rx="43" ry="66" transform="rotate(22 1410 305)" fill="#777a8e" stroke="#0c0c10" strokeWidth="3" />
      <F f="#9a9db3" p="M1405 288L1440 276 1472 290 1437 303z" />
      <F f="#666876" p="M1405 288L1437 303 1430 350 1398 334z" />
      <F f="#8386a0" p="M1437 303L1472 290 1463 340 1430 350z" />
      <F f="#5a5c69" p="M892 100Q895 55 945 55L1140 168Q1178 200 1177 270 1170 305 1140 295L985 210 905 165Q892 130 892 100z" />
      <F f="url(#rim)" p="M905 65Q930 50 950 58L1142 170Q1172 195 1176 250L1168 232Q1155 195 1135 185L950 80Q920 70 902 90z" />
      <F f="#a0a3ba" p="M1000 148L1120 205Q1155 230 1150 255L1135 264 1000 192z" />
      <Edge p="M1005 188L1138 258M1135 185L1145 172" />
      <g transform="rotate(-20 955 145)">
        <ellipse cx="962" cy="145" rx="46" ry="66" fill="#85889d" stroke="#0c0c10" strokeWidth="3" />
        <ellipse cx="952" cy="145" rx="44" ry="63" fill="#50515c" stroke="#0c0c10" strokeWidth="3" />
      </g>
      <F f="#a0a3ba" p="M905 130L930 110 970 128 948 147z" />
      <F f="#5f616e" p="M905 130L948 147 950 200 907 182z" />
      <F f="#8386a0" p="M948 147L970 128 974 188 950 200z" />
    </g>
  </g>
);

const G = ({ id, x2, y2, s, x1 = "0", y1 = "0" }: { id: string; x1?: string; y1?: string; x2: string; y2: string; s: string[] }) => (
  <linearGradient id={id} x1={x1} y1={y1} x2={x2} y2={y2}>
    {s.map((c, i) => <stop key={i} offset={i / (s.length - 1)} stopColor={c} />)}
  </linearGradient>
);

const Scene = () => (
  <div className="relative min-w-0 flex-1 bg-[radial-gradient(ellipse_75%_52%_at_0%_0%,#ffffff_45%,rgba(255,255,255,0)_100%),radial-gradient(ellipse_26%_45%_at_100%_0%,#f2f3f6_20%,rgba(242,243,246,0)_100%),linear-gradient(180deg,#e6e8f0_0%,#dfe2ec_30%,#dddfea_46%,#e2e4ed_52%,#f3f4f8_59%,#fcfcfd_65%,#ffffff_74%,#fdfdfe_88%,#f4f5f9_100%)]">
    <svg viewBox="411 183 1509 794" className="absolute inset-0 h-full w-full" role="img" aria-label="Follow rest assembly, isometric view">
      <defs>
        <filter id="soft" x="-20%" y="-20%" width="140%" height="140%"><feGaussianBlur stdDeviation="32" /></filter>
        <G id="hole" x2="1" y2="0" s={["#4b4c56", "#70738a", "#9a9db3"]} />
        <G id="strip" x1="0.4" y1="0.6" x2="0.600" y2="0.300" s={["#62647a", "#8d90a6", "#9a9db3"]} />
        <G id="bend" x2="1" y2="0" s={["#a5a8bf", "#777a8e", "#666978"]} />
        <G id="pocket" x2="1" y2="1" s={["#6f7286", "#9a9db3", "#8386a0"]} />
        <G id="col" x2="1" y2="0" s={["#62647a", "#8a8da3", "#a0a3ba"]} />
        <G id="arch" x2="1" y2="1" s={["#8386a0", "#a0a3ba", "#8d90a6"]} />
        <G id="rim" x2="1" y2="1" s={["#80839a", "#a0a3ba", "#6f7286"]} />
        <G id="band" x2="1" y2="1" s={["#777a8e", "#adb0c8", "#85889d", "#72758a"]} />
        <linearGradient id="armA" gradientUnits="userSpaceOnUse" x1="280" y1="480" x2="500" y2="340">
          <stop offset="0" stopColor="#50525f" /><stop offset=".35" stopColor="#80839a" /><stop offset=".75" stopColor="#a3a6bd" /><stop offset="1" stopColor="#7f8297" />
        </linearGradient>
        <linearGradient id="armB" gradientUnits="userSpaceOnUse" x1="1120" y1="0" x2="1010" y2="210">
          <stop offset="0" stopColor="#8386a0" /><stop offset=".3" stopColor="#9093a9" /><stop offset=".7" stopColor="#6f7286" /><stop offset="1" stopColor="#50525f" />
        </linearGradient>
      </defs>
      <Model />
      <g strokeLinecap="butt">
        <path d="M461 910V888" stroke="#1c6b1c" strokeWidth="5" /><path d="M455 891l6-13 6 13q-6 3-12 0z" fill="#2c8a2c" />
        <path d="M461 910l18 9" stroke="#c01818" strokeWidth="5" /><path d="M476 923l5-9 8 12q-6 1-13-3z" fill="#e02020" />
        <path d="M461 910l-18 9" stroke="#1818b0" strokeWidth="5" /><path d="M446 923l-5-9-8 12q6 1 13-3z" fill="#2828d0" />
        <text x="461" y="877" textAnchor="middle" fontSize="11" fill="#0c8a0c" fontFamily="Liberation Sans, sans-serif">Y</text>
        <text x="491" y="931" textAnchor="middle" fontSize="13" fill="#f01818" fontFamily="Liberation Sans, sans-serif">X</text>
        <text x="430" y="931" textAnchor="middle" fontSize="13" fill="#1010e0" fontFamily="Liberation Sans, sans-serif">Z</text>
      </g>
      <text x="421" y="973" fontSize="18" fill="#000" fontFamily="Lato, sans-serif">*Isometric</text>
    </svg>
    <nav aria-label="Task pane" className="absolute top-[55px] right-0 flex w-[33px] flex-col border border-r-0 border-[#8a8a8a]">
      {([
        ["3DEXPERIENCE", <Svg><circle cx="10" cy="10" r="9" fill="#1f5f86" /><path d="M4 5a8 8 0 0 1 12 0M4 15a8 8 0 0 0 12 0M8 7l5 3-5 3z" stroke="#8fc4de" strokeWidth="1.200" /></Svg>, "h-[29px]"],
        ["Resources", <HomeIcon />, "h-[30px]"],
        ["Design Library", <Svg><path d="M3 5l3-2 3 1v13l-3 2-3-2zM8 4l3-2 3 1v13l-3 2-3-2zM13 3l2-2 3 1v13l-3 2-2-1z" fill="#e3e3e3" stroke="#555" strokeWidth=".9" /></Svg>, "h-[30px]"],
        ["File Explorer", <Svg><path d="M1 2h6l1 3h7v13H1z" fill="#b9b9b9" /><path d="M6 8h13l-4 10H1z" fill="#eaeaea" /></Svg>, "h-[30px]"],
        ["View Palette", <Svg><path d="M1 1h18v18H1z" fill="#efefef" stroke="#777" strokeWidth="1.500" /><path d="M4 4h8v3H4zM14 4h3v3h-3zM8 9h3v4h4v3H4v-3h4z" fill={Y} stroke="#6b5200" /></Svg>, "h-[30px]"],
        ["Appearances", <Ball />, "h-[30px]"],
        ["Custom Properties", <ListIcon />, "h-[30px]"],
      ] as [string, React.ReactNode, string][]).map(([l, ic, h], i) => (
        <button key={l} aria-label={l} className={`${h} flex items-center justify-center border-b border-[#8a8a8a] last:border-b-0 ${i === 1 ? "bg-[#b5b5b5]" : "bg-[#323232]"}`}>{ic}</button>
      ))}
    </nav>
  </div>
);

/* ---------- bottom bars ---------- */
const BottomTabs = () => (
  <div className="flex h-[22px] shrink-0 items-stretch border-b border-[#8a8a8a] pl-[138px] font-['Noto_Sans',sans-serif] text-[14px]">
    <div className="w-[27px] bg-[#b0b0b0]" />
    {["M5 3v10M12 3L6 8l6 5z", "M11 3L5 8l6 5z", "M5 3l6 5-6 5z", "M11 3v10M4 3l6 5-6 5z"].map((p, i) => (
      <button key={p} aria-label={["First", "Previous", "Next", "Last"][i]} className="flex w-5 items-center justify-center border border-[#7f7f95] bg-[#a6a6bc]">
        <svg viewBox="0 0 16 16" className="h-4 w-4" fill="#77778c" stroke="#77778c"><path d={p} /></svg>
      </button>
    ))}
    <button className="w-[77px] border-r border-[#8a8a8a] pl-2.5 font-bold text-white">Model</button>
    <button className="w-[89px] border-t border-r border-[#8a8a8a] bg-[#323232] text-[#ededed]">3D Views</button>
    <button className="w-[143px] border-t border-r border-[#8a8a8a] bg-[#323232] pr-2.5 text-[15px] text-[#ededed]">Motion Study 1</button>
    <div className="flex-1 border-t border-[#8a8a8a]" />
  </div>
);

const StatusBar = () => (
  <footer className="flex h-[22px] shrink-0 items-center pt-px font-['Noto_Sans',sans-serif] text-[14px] text-[#f0f0f0]">
    <span className="flex-1 pl-px">SOLIDWORKS Premium 2022 SP5.0</span>
    <span className="mr-[18px]">Under Defined</span>
    <span>Editing Assembly</span>
    <span className="ml-[21px] h-5 border-l border-[#ddd]" />
    <button aria-label="Performance" className="ml-1"><Svg size="h-[18px] w-[18px]"><path d="M1 12h18v7H1z" fill="#5aa7cf" /><path d="M4 12v7M8 12v7M12 10v9M16 8v11" stroke="#eee" /><path d="M1 12L7 1l6 11z" fill="#fcd22e" stroke="#a07800" /><path d="M7 5v4M12 11c4 0 5-3 5-7M14 6l3-4 2 4" stroke="#111" strokeWidth="1.500" /></Svg></button>
    <button className="ml-[74px] flex items-center gap-5">MMGS <svg viewBox="0 0 6 4" className="h-1 w-1.5"><path d="M0 4h6L3 0z" fill="#fff" /></svg></button>
    <button aria-label="Tags" className="mr-[3px] ml-[27px]"><Svg size="h-4 w-4"><path d="M1 5l4-3 3 4 2-3 8 5-3 6-5 3z" fill="#ddd" stroke="#888" /><path d="M5 8l6 4 2-4" stroke="#444" strokeWidth="1.300" /></Svg></button>
  </footer>
);

const Big = ({ children }: Kids) => <svg viewBox="0 0 32 32" className="h-8 w-8" aria-hidden="true" fill="none">{children}</svg>;
const Tag = ({ x, y, s, c = "#fff", t }: { x: number; y: number; s: number; c?: string; t: string }) => (
  <text x={x} y={y} fontSize={s} fontWeight="700" fill={c} textAnchor="middle" fontFamily="Liberation Sans, sans-serif">{t}</text>
);
const YearApp = ({ y }: { y: string }) => (
  <Big><path d="M1 1h30v30H1z" fill="#0b67a8" /><path d="M1 1h30v18H1z" fill="#f2f5f8" /><path d="M3 4l15 0-3 11-8-3-4 4z" fill="#0b5f98" /><path d="M6 7l8 0-2 5-5-1z" fill="#cfe4f2" /><Tag x={21} y={29} s={8} t={y} /></Big>
);
const apps: { l: string; i: React.ReactNode; dot?: boolean; on?: boolean }[] = [
  { l: "Copilot", i: <Big><path d="M8 3h9c3 0 4 2 3 5l-5 13c-1 3-3 4-6 4-6 0-8-4-6-9L6 6z" fill="#2a8fe0" /><path d="M3 18l3-8 9 3-4 12c-6 0-9-2-8-7z" fill="#4fc27a" /><path d="M9 3h8c2 0 3 2 3 4l-2 3H8z" fill="#1f5fc4" /><path d="M16 10h8c4 0 5 3 4 7l-2 7H13z" fill="#c86be0" /><path d="M20 10h4c4 0 5 3 4 7l-1 3h-9z" fill="#f08bb8" /><path d="M9 19h22v12H9z" fill="#fbc81c" /><Tag x={20} y={29} s={9} c="#111" t="PRE" /></Big> },
  { l: "Task View", i: <Big><path d="M1 9h20v20H1z" fill="#757a7d" /><path d="M9 2h22v20H9z" fill="#eeeeee" /><path d="M9 9h12v13H9z" fill="#b5b5b5" /></Big> },
  { l: "Chat", i: <Big><path d="M2 30V15A14 14 0 1 1 16 29c-4 0-6 2-14 1z" fill="#6264c7" /><rect x="8" y="10" width="11" height="11" rx="2" fill="#fff" /><path d="M20 14l5-3v9l-5-3z" fill="#fff" /></Big> },
  { l: "Firefox", dot: true, i: <Big><circle cx="16" cy="18" r="13" fill="#ff5a36" /><path d="M20 1c8 6 11 13 8 20-3 8-13 12-20 7 10 2 16-3 15-10-1-6-5-8-3-17z" fill="#ffc62e" /><path d="M3 17C3 10 5 7 6 4l4 5c3-1 5-1 7 0-3 1-4 3-4 5-3 3-2 9 3 10-8 2-13-2-13-7z" fill="#ff8a1c" /><circle cx="17" cy="18" r="5.500" fill="#8a3fd6" /><path d="M4 23c4 8 15 10 21 4-8 3-16 1-21-4z" fill="#e0228a" /></Big> },
  { l: "File Explorer", i: <Big><path d="M1 4h11l3 4H1z" fill="#d99a16" /><path d="M1 7h30v22H1z" fill="#fbcf4b" /><path d="M7 20h18v9H7z" fill="#1879c9" /><path d="M11 24h10" stroke="#0b4f8a" strokeWidth="2" /></Big> },
  { l: "WPS Office", dot: true, i: <Big><circle cx="15" cy="17" r="14" fill="#f0357d" /><path d="M1 17a14 14 0 0 1 14-14l-4 26A14 14 0 0 1 1 17z" fill="#a93de0" /><path d="M7 12l4 11 4-8 4 8 4-11" stroke="#fff" strokeWidth="2.600" strokeLinejoin="round" /><rect x="23" y="0" width="9" height="12" rx="2" fill="#ff9b9b" /><Tag x={27} y={9} s={9} c="#7a2020" t="2" /></Big> },
  { l: "SOLIDWORKS 2022", on: true, i: <Big><path d="M3 6l12-5 14 3v18l-12 6-14-4z" fill="#c3161c" /><path d="M3 6l12-5 14 3-13 5z" fill="#ef5350" /><path d="M16 9l13-5v18l-13 6z" fill="#8e0d12" /><Tag x={10} y={21} s={14} t="S" /><Tag x={22} y={19} s={13} t="W" /><path d="M6 22h26v10H6z" fill="#111" /><Tag x={19} y={31} s={11} t="2022" /></Big> },
  { l: "Composer 2021", i: <YearApp y="2021" /> },
  { l: "Composer 2023", i: <YearApp y="2023" /> },
  { l: "ACS", dot: true, i: <Big><path d="M3 1h25l2 3v20H3z" fill="#f2f2f2" /><path d="M7 17l10-10h8v10h-6v-4l-6 4z" fill="#111" /><path d="M4 23h26v8H4z" fill="#333" /><Tag x={17} y={30} s={7} t="ACS" /></Big> },
  { l: "eDrawings 2022", dot: true, i: <Big><path d="M0 12h9M6 8l4 4-4 4M12 3v18" stroke="#a6ce39" strokeWidth="2.500" /><path d="M15 12h13c0-10-12-9-12 0 0 8 8 9 12 5" stroke="#a6ce39" strokeWidth="4" /><path d="M9 23h21v9H9z" fill="#000" /><Tag x={20} y={31} s={9} t="2022" /></Big> },
];

const Taskbar = () => (
  <nav aria-label="Taskbar" className="grid h-[59px] shrink-0 grid-cols-[1fr_auto_1fr] items-center border-t border-[#2d3d4a] bg-[linear-gradient(90deg,#1c2531_0%,#202329_20%,#1c2730_30%,#182a36_55%,#15262f_75%,#142a2c_82%,#19233c_92%,#1d2230_100%)]">
    <button aria-label="Weather" className="flex items-center gap-2 pl-6 text-left font-['Noto_Sans',sans-serif] text-[14px] leading-5 text-white">
      <svg viewBox="0 0 32 36" className="h-9 w-8" fill="none">
        <circle cx="16" cy="24" r="12" fill="#f08a24" /><path d="M5 14h14M7 19h22M1 24h26M3 29h22" stroke="#f6cf74" strokeWidth="2.500" strokeLinecap="round" />
        <circle cx="23" cy="9" r="9" fill="#ff9aa2" /><text x="23" y="14" fontSize="13" textAnchor="middle" fill="#222" fontFamily="Open Sans, sans-serif">1</text>
      </svg>
      <span>74°F<br /><span className="text-[#c4c8cc]">Haze</span></span>
    </button>
    <div className="flex items-center">
      <button aria-label="Start" className="flex w-[54px] justify-center">
        <svg viewBox="0 0 30 30" className="h-[30px] w-[30px]"><defs><G id="win" x2="1" y2="1" s={["#7fdcfb", "#3fb8f8", "#0a8cf5"]} /></defs><path d="M0 0h14v14H0zM16 0h14v14H16zM0 16h14v14H0zM16 16h14v14H16z" fill="url(#win)" /></svg>
      </button>
      <label className="mr-1 ml-1.5 flex h-10 w-[274px] items-center rounded-full border border-[#4a5257] bg-[#3a4347] pl-3">
        <svg viewBox="0 0 20 20" className="h-5 w-5" fill="none" stroke="#f2f2f2" strokeWidth="1.800"><circle cx="9" cy="8" r="6.500" /><path d="M13.500 13l5 6" /></svg>
        <input aria-label="Search" placeholder="Search" className="ml-3 min-w-0 flex-1 bg-transparent text-[16px] text-white outline-none placeholder:text-[#d2d5d6]" />
      </label>
      {apps.map((a) => (
        <button key={a.l} aria-label={a.l} className="flex w-[55px] justify-center">
          <span className={`relative flex h-[50px] w-[50px] items-center justify-center rounded ${a.on ? "border border-[#3a444e] bg-[#2b343e]" : ""}`}>
            {a.i}
            {a.dot && <span className="absolute bottom-0 h-[3px] w-1.5 rounded-full bg-[#98a0a6]" />}
            {a.on && <span className="absolute bottom-0 h-[3px] w-5 rounded-full bg-[#4cc2ff]" />}
          </span>
        </button>
      ))}
    </div>
    <div className="flex items-center justify-end text-white">
      <button aria-label="Hidden icons" className="mr-[22px]"><svg viewBox="0 0 16 16" className="h-4 w-4" fill="none" stroke="#fff" strokeWidth="1.700"><path d="M2 11l6-6 6 6" /></svg></button>
      <button aria-label="OneDrive" className="mr-[18px]"><svg viewBox="0 0 22 16" className="h-4 w-[22px]"><path d="M4 14a4 4 0 0 1 0-8 6 6 0 0 1 11-1 5 5 0 0 1 2 9z" fill="#b8b8b8" /><path d="M4 15c-3-3 0-6 3-6 4-3 8 0 9 1 5-1 7 4 3 5z" fill="#f5f5f5" /></svg></button>
      <button aria-label="Network, volume and battery" className="flex items-center gap-2">
        <svg viewBox="0 0 20 18" className="h-[18px] w-5" fill="none" stroke="#fff" strokeWidth="1.700"><path d="M1 6c5-5 13-5 18 0" stroke="#6c7880" /><path d="M4 9c3-3 9-3 12 0M6.500 12c2-2 5-2 7 0" /><circle cx="10" cy="15" r="1.500" fill="#fff" stroke="none" /></svg>
        <svg viewBox="0 0 20 18" className="h-[18px] w-5" fill="none" stroke="#fff" strokeWidth="1.600"><path d="M1 6h4l5-4v14l-5-4H1zM12 6c2 2 2 4 0 6" /><path d="M14.500 4c3 3 3 7 0 10M17 2c4 4 4 10 0 14" stroke="#6c7880" /></svg>
        <svg viewBox="0 0 21 14" className="h-3.5 w-[21px]" fill="none" stroke="#fff" strokeWidth="1.600"><rect x="1" y="1" width="16" height="12" rx="3" /><rect x="4" y="4" width="9" height="6" fill="#fff" /><path d="M19.500 5v4" strokeWidth="2" /></svg>
      </button>
      <button aria-label="Clock" className="ml-5 text-right font-['Noto_Sans',sans-serif] text-[14px] leading-5">22.54<br />17/11/2023</button>
      <button aria-label="Notifications" className="mr-[26px] ml-2.5"><svg viewBox="0 0 18 20" className="h-5 w-[18px]" fill="#8fdcff"><path d="M9 0c5 0 7 3 7 7v5l2 4H0l2-4V7c0-4 2-7 7-7zM6 17h6c-1 3-5 3-6 0z" /></svg></button>
    </div>
  </nav>
);

export default function App() {
  return (
    <div className="flex h-screen flex-col overflow-hidden bg-[#484848] font-['Open_Sans','Noto_Sans',sans-serif] select-none">
      <TitleBar />
      <ViewBar />
      <Ribbon />
      <TabRow />
      <main className="flex min-h-0 flex-1">
        <div className="-mb-[18px] flex w-[53px] shrink-0 flex-col">
          <ToolGroup items={colA1} w="w-[53px]" pad="pb-[7px]" name="Features" />
          <ToolGroup items={colA2} w="w-[34px]" pad="pt-0.5 pb-[7px]" name="Reference Geometry" />
          <ToolGroup items={colA3} w="w-[34px]" pad="pt-0.5 border-b-0" name="Surfaces" />
          <More w="w-[34px]" />
        </div>
        <div className="-mb-[18px] flex w-[53px] shrink-0 flex-col">
          <ToolGroup items={colB1} w="w-[53px]" pad="pb-[7px]" name="Sheet Metal" />
          <ToolGroup items={colB2} w="w-[53px]" pad="pt-0.5 pb-2 border-b-0" name="Weldments" />
          <More w="w-[53px]" />
        </div>
        <div className="w-8 shrink-0 border-r border-[#8a8a8a]">
          <div className="border-b border-[#8a8a8a] pb-1.5">
            <Grip />
            {["route", "step"].map((n) => (
              <button key={n} aria-label={n} className="flex h-[26px] w-full items-center justify-center"><Dim n={n} /></button>
            ))}
          </div>
        </div>
        <Panel />
        <Scene />
      </main>
      <BottomTabs />
      <StatusBar />
      <Taskbar />
    </div>
  );
}
